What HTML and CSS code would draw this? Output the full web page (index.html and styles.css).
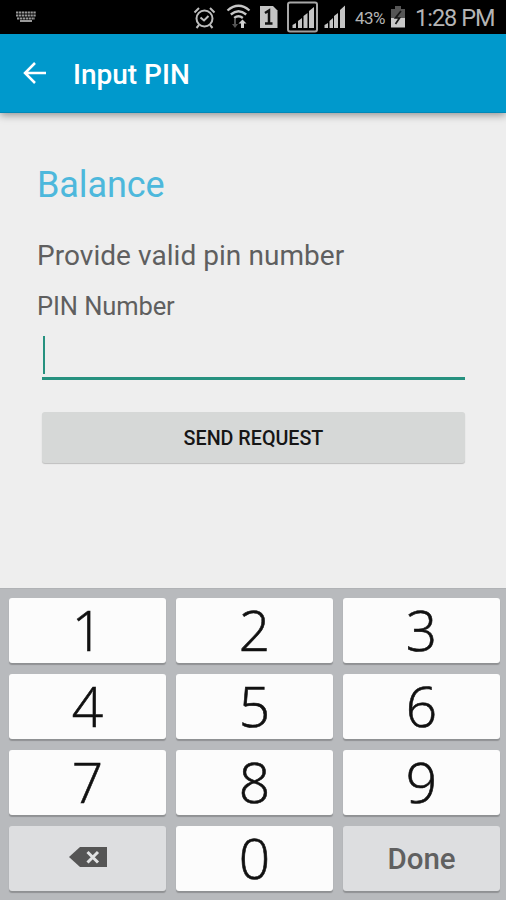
FILE: index.html
```html
<!DOCTYPE html>
<html lang="en">
    <head>
        <meta charset="utf-8">
        <title>Input PIN</title>
        <meta name="viewport" content="width=device-width, initial-scale=1.0">
        <link rel="stylesheet" href="styles.css">
    </head>
    <body>
        <div class="status-bar">
            <svg class="keyboard-icon" width="20" height="12" viewBox="0 0 20 12">
                <path d="M0 1.5h20M0 4.5h20M1 7.5h18" stroke="#999" stroke-width="2" stroke-dasharray="2.3 .6"/>
                <path d="M4 10h12" stroke="#999" stroke-width="2"/>
            </svg>
            <svg class="status-icons" width="156" height="34" viewBox="0 0 156 34">
                <!-- alarm -->
                <g fill="none" stroke="#bdbdbd" stroke-width="2">
                    <circle cx="11.5" cy="18.5" r="8"/>
                    <path d="M7.5 17.5l3.5 3 4.5-4.5M6 25l-2.5 3M17 25l2.5 3M1.5 12.5l4.5-4.5M21.5 12.5l-4.5-4.5"/>
                </g>
                <!-- wifi -->
                <g fill="none" stroke="#c6c6c6" stroke-width="2.3">
                    <path d="M34.5 10.5q11-9.5 22 0M37.8 14.5q7.7-6.5 15.4 0M41.2 18q4.3-3.5 8.6 0"/>
                </g>
                <path d="M41 19h2v5h2l-3 4-3-4h2z" fill="#555"/>
                <path d="M49.5 19.5l4 4h-2.5v4.5h-3v-4.5h-2.5z" fill="#d0d0d0"/>
                <!-- sim -->
                <path d="M67 6h13l4.5 4.5v17.5h-17.5z" fill="#c4c4c4"/>
                <path d="M72 13l4-2.5v13.5M72 23.5h7.5" fill="none" stroke="#111" stroke-width="2.5"/>
                <!-- signal, active sim -->
                <rect x="95" y="2.5" width="29" height="29" rx="2" fill="none" stroke="#a8a8a8" stroke-width="2"/>
                <path d="M99.5 25l3.5-2v5h-3.5zM105 21l4-3v10h-4zM110.5 16l4-3v15h-4zM116 11l5-4v21h-5z" fill="#c4c4c4"/>
                <!-- signal, second sim -->
                <path d="M131.5 25l3.5-2v5h-3.5zM136.5 21l3.5-3v10h-3.5zM141 16l4-3v15h-4zM147 10l5-4.5v22.5h-5z" fill="#c4c4c4"/>
            </svg>
            <span class="battery-level">43%</span>
            <svg class="battery-icon" width="16" height="22" viewBox="0 0 16 22">
                <path d="M1 3h4v-3h6v3h4v9h-14z" fill="#555"/>
                <path d="M1 12h14v9.5h-14z" fill="#c8c8c8"/>
                <path d="M11 5l-5.5 7h4l-4 6" fill="none" stroke="#161616" stroke-width="1.7"/>
            </svg>
            <span class="clock">1:28 PM</span>
        </div>
        <div class="app-bar">
            <svg class="back-icon" width="24" height="24" viewBox="0 0 24 24">
                <path d="M23 12h-21M12 2l-10 10 10 10" fill="none" stroke="#fff" stroke-width="2.5"/>
            </svg>
            <h1>Input PIN</h1>
        </div>
        <div class="content">
            <h2>Balance</h2>
            <p class="hint">Provide valid pin number</p>
            <label class="pin-label">PIN Number</label>
            <div class="pin-field"><span class="cursor"></span></div>
            <button class="send-button">SEND REQUEST</button>
        </div>
        <div class="keyboard">
            <button class="key">1</button>
            <button class="key">2</button>
            <button class="key">3</button>
            <button class="key">4</button>
            <button class="key">5</button>
            <button class="key">6</button>
            <button class="key">7</button>
            <button class="key">8</button>
            <button class="key">9</button>
            <button class="key key-action">
                <svg class="delete-icon" width="38" height="20" viewBox="0 0 38 20">
                    <path d="M0 10l11-10h27v20h-27z" fill="#555"/>
                    <path d="M18.5 5l10.5 10.5M29 5l-10.5 10.5" stroke="#e2e3e4" stroke-width="3"/>
                </svg>
            </button>
            <button class="key">0</button>
            <button class="key key-action">Done</button>
        </div>
    </body>
</html>
```

FILE: styles.css
```css
* {
    box-sizing: border-box;
}
body {
    margin: 0;
    height: 900px;
    display: flex;
    flex-direction: column;
    overflow: hidden;
    background: #eeeeee;
    font-family: Roboto, "Liberation Sans", sans-serif;
}
h1, h2, p {
    margin: 0;
}
svg {
    display: block;
    flex-shrink: 0;
}
button {
    border: 0;
    padding: 0;
    font-family: inherit;
}
.status-bar {
    height: 34px;
    display: flex;
    align-items: center;
    background: #000;
    color: #b4b4b4;
    white-space: nowrap;
}
.keyboard-icon {
    margin-left: 16px;
}
.status-icons {
    margin-left: 157px;
}
.battery-level {
    width: 35px;
    margin-left: 6px;
    padding-top: 2px;
    font-size: 17px;
    letter-spacing: -0.5px;
}
.battery-icon {
    margin-top: -1px;
}
.clock {
    margin-left: 9px;
    padding-top: 2px;
    font-size: 23.5px;
    letter-spacing: -1px;
}
.app-bar {
    height: 79px;
    display: flex;
    align-items: center;
    padding-left: 23px;
    background: #0099cc;
    border-bottom: 1px solid #0088b8;
    box-shadow: 0 2px 8px rgba(0, 0, 0, 0.4);
    color: #fff;
}
.app-bar h1 {
    margin-left: 26px;
    padding-top: 2px;
    font-size: 28px;
    font-weight: 500;
}
.content {
    flex: 1;
    display: flex;
    flex-direction: column;
    padding: 51px 38px 0 37px;
    color: #5f5f5f;
}
.content h2 {
    line-height: 42px;
    font-size: 36px;
    font-weight: 400;
    letter-spacing: -0.1px;
    color: #4db8dc;
}
.hint {
    margin-top: 33px;
    line-height: 34px;
    font-size: 28px;
    letter-spacing: 0.05px;
}
.pin-label {
    margin-top: 18px;
    line-height: 30px;
    font-size: 25.5px;
    letter-spacing: -0.1px;
}
.pin-field {
    height: 44px;
    margin: 15px 3px 0 5px;
    border-bottom: 3px solid #26917f;
}
.cursor {
    display: block;
    width: 2px;
    height: 38px;
    margin-left: 1px;
    background: #26917f;
}
.send-button {
    height: 51px;
    margin: 32px 3px 0 5px;
    padding-top: 2px;
    border-radius: 3px;
    background: #d6d8d7;
    box-shadow: 0 1px 1px rgba(0, 0, 0, 0.2);
    font-size: 19.7px;
    font-weight: 500;
    color: #161616;
}
.keyboard {
    height: 312px;
    display: grid;
    grid-template-columns: repeat(3, 157px);
    grid-auto-rows: 65px;
    gap: 11px 10px;
    padding: 9px 0 0 9px;
    border-top: 1px solid #b0b2b5;
    background: #b8babd;
}
.key {
    display: flex;
    align-items: center;
    justify-content: center;
    padding-bottom: 2px;
    border-radius: 3px;
    background: #fcfcfc;
    box-shadow: 0 2px 1px rgba(0, 0, 0, 0.22);
    font-family: "Open Sans", "Noto Sans", sans-serif;
    font-size: 55px;
    font-weight: 300;
    line-height: 63px;
    color: #111;
    -webkit-text-stroke: 0.6px #111;
}
.key-action {
    padding: 2px 0 0;
    background: #dddee0;
    font-family: Roboto, sans-serif;
    font-size: 29.5px;
    font-weight: 500;
    color: #606060;
    -webkit-text-stroke: 0;
}
.delete-icon {
    margin-bottom: 5px;
}
```
